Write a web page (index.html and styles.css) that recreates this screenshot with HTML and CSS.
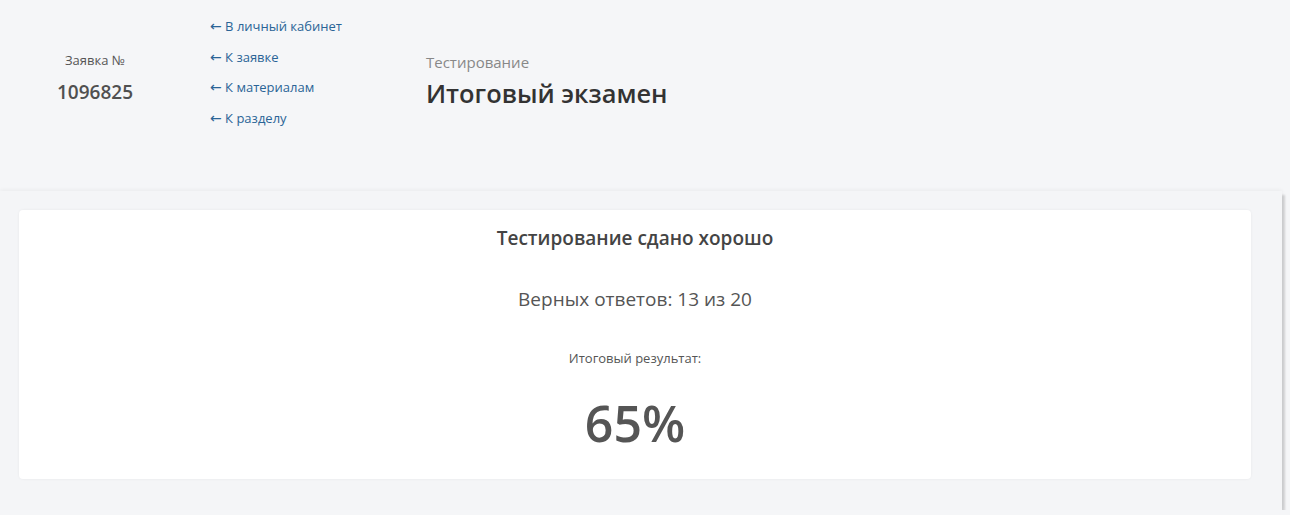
FILE: index.html
```html
<!DOCTYPE html>
<html lang="ru">

<head>
  <meta charset="utf-8">
  <meta name="viewport" content="width=device-width, initial-scale=1.0">
  <title>Итоговый экзамен</title>
  <link rel="stylesheet" href="styles.css">
</head>

<body>
  <header id="page-header">
    <div class="order-box">
      <div class="order-label">Заявка №</div>
      <div class="order-number">1096825</div>
    </div>

    <nav class="back-links">
      <a href="#" class="back-link"><span class="arrow">&larr;</span> В личный кабинет</a>
      <a href="#" class="back-link"><span class="arrow">&larr;</span> К заявке</a>
      <a href="#" class="back-link"><span class="arrow">&larr;</span> К материалам</a>
      <a href="#" class="back-link"><span class="arrow">&larr;</span> К разделу</a>
    </nav>

    <div class="page-title">
      <div class="page-subtitle">Тестирование</div>
      <h1 class="page-heading">Итоговый экзамен</h1>
    </div>
  </header>

  <main id="result-holder">
    <section class="result-card">
      <h2 class="result-status">Тестирование сдано хорошо</h2>
      <p class="result-answers">Верных ответов: 13 из 20</p>
      <p class="result-label">Итоговый результат:</p>
      <p class="result-percent">65%</p>
    </section>
  </main>
</body>

</html>
```

FILE: styles.css
```css
html {
  height: 100%;
}

body {
  margin: 0;
  font-family: "Open Sans", "Noto Sans", sans-serif;
  background-color: #f5f6f8;
  color: #555;
}

#page-header {
  display: flex;
  height: 191px;
}

.order-box {
  width: 190px;
  padding-top: 50px;
  text-align: center;
}

.order-label {
  font-size: 13px;
  line-height: 20px;
  color: #555;
}

.order-number {
  margin-top: 10px;
  font-size: 19px;
  line-height: 24px;
  font-weight: 600;
  color: #505050;
}

.back-links {
  width: 236px;
  padding-left: 20px;
  padding-top: 11px;
  box-sizing: border-box;
  display: flex;
  flex-direction: column;
}

.back-link {
  display: block;
  height: 30.7px;
  font-size: 13px;
  line-height: 30px;
  color: #2a6496;
  text-decoration: none;
  white-space: nowrap;
}

.arrow {
  font-family: "DejaVu Sans", sans-serif;
  font-size: 14px;
  line-height: 10px;
}

.page-title {
  padding-top: 52px;
}

.page-subtitle {
  font-size: 15px;
  line-height: 20px;
  color: #888;
}

.page-heading {
  margin: 4px 0 0 0;
  font-size: 25.4px;
  line-height: 34px;
  font-weight: 600;
  color: #333;
}

#result-holder {
  width: 1282px;
  box-sizing: border-box;
  padding: 19px 31px 31px 19px;
  background-color: #f4f5f7;
  box-shadow: 0px -1px 4px rgba(0, 0, 0, 0.05), 3px 4px 2px rgba(0, 0, 0, 0.15);
}

.result-card {
  padding: 16px 0 24px 0;
  text-align: center;
  background-color: white;
  border-radius: 4px;
  box-shadow: 0px 0px 3px rgba(0, 0, 0, 0.06);
}

.result-status {
  margin: 0;
  font-size: 19px;
  line-height: 24px;
  font-weight: 600;
  color: #444;
}

.result-answers {
  margin: 36px 0 0 0;
  font-size: 19px;
  line-height: 26px;
  color: #555;
}

.result-label {
  margin: 38px 0 0 0;
  font-size: 13px;
  line-height: 16px;
  color: #555;
}

.result-percent {
  margin: 25px 0 0 0;
  font-size: 50px;
  line-height: 64px;
  font-weight: 600;
  color: #555;
}
```
